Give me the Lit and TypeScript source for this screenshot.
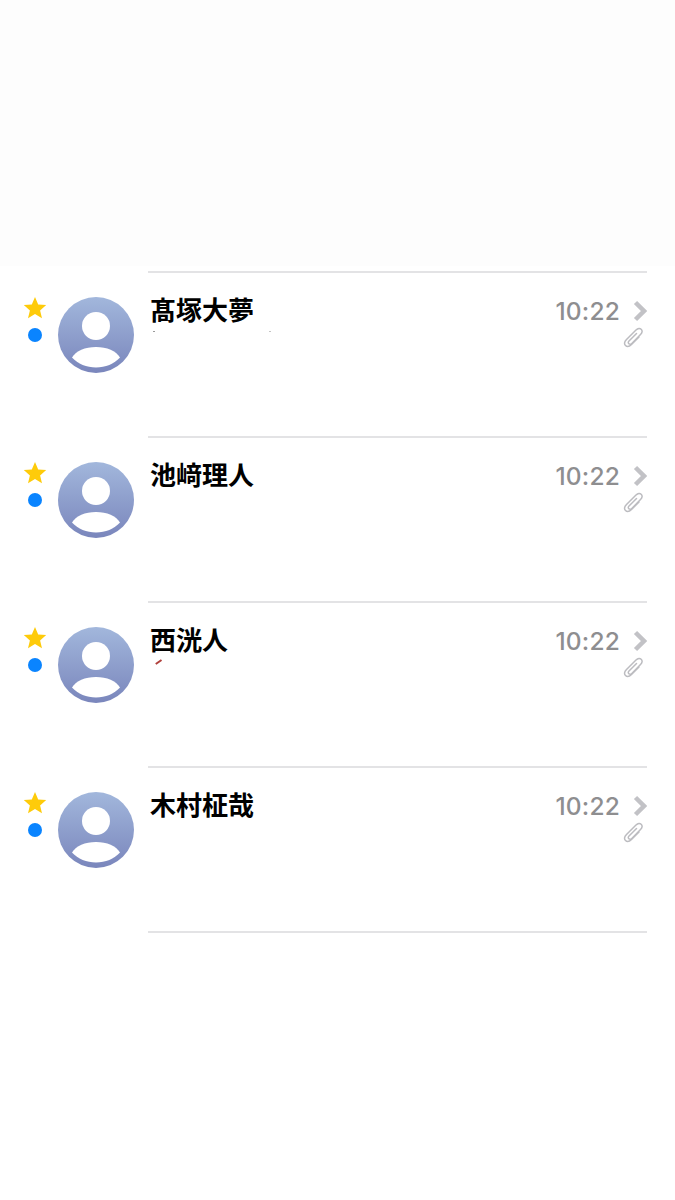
import { LitElement, html, css, svg } from 'lit';
import { customElement } from 'lit/decorators.js';

type Mail = { name: string; marks?: string };

const mails: Mail[] = [
  { name: '髙塚大夢', marks: 'specks' },
  { name: '池﨑理人' },
  { name: '西洸人', marks: 'red' },
  { name: '木村柾哉' },
];

const star = html`<svg class="star" viewBox="0 0 24 24" width="24" height="24">
  <path fill="#fecb0a" d="M12 1l3.200 7.400 8 .7-6.100 5.300 1.900 7.900L12 18.100 5 22.300l1.900-7.900L.8 9.100l8-.7z" />
</svg>`;

const avatar = html`<svg class="avatar" viewBox="0 0 76 76" width="76" height="76">
  <defs>
    <linearGradient id="av" x1="0" y1="0" x2="0" y2="1">
      <stop offset="0" stop-color="#a2b7dc" />
      <stop offset="1" stop-color="#7a86bc" />
    </linearGradient>
  </defs>
  <circle cx="38" cy="38" r="38" fill="url(#av)" />
  <circle cx="38" cy="29" r="14" fill="#fff" />
  <path fill="#fff" d="M14 60.500C18 54 27 50 38 50s20 4 24 10.500C56 67 47.500 70.500 38 70.500S20 67 14 60.500z" />
</svg>`;

const chevron = svg`<path d="M2.500 2.500l8.500 8.500-8.500 8.500" fill="none" stroke="#c2c2c6" stroke-width="4.500" />`;

const clip = svg`<path fill="none" stroke="#bcbcc0" stroke-width="1.500" stroke-linecap="round"
  d="M14.500 7.500L7 15c-1 1-1 2 0 2.800.9.800 1.800.7 2.800-.3l8.700-9c2-2 2-4 .7-5.200C18 2 16 2 14 4l-9.500 9.500c-2.300 2.300-2.500 4.500-1 6 1.500 1.500 3.700 1.300 6-1L17 11" />`;

@customElement('app-root')
export class AppRoot extends LitElement {
  static styles = css`
    :host {
      display: block;
      height: 1200px;
      background: #fff;
      font-family: 'Noto Sans CJK JP', 'Liberation Sans', sans-serif;
    }
    .top {
      height: 266px;
      background: #fdfdfd;
    }
    .list {
      padding-top: 5px;
    }
    .row {
      display: grid;
      grid-template-columns: 148px 1fr;
      height: 165px;
      margin-right: 28px;
    }
    .row:last-child {
      height: 2px;
    }
    .left {
      display: flex;
      align-items: flex-start;
    }
    .flags {
      display: flex;
      flex-direction: column;
      align-items: center;
      width: 24px;
      margin-left: 23px;
      padding-top: 25px;
      gap: 7px;
    }
    .star {
      display: block;
    }
    .dot {
      width: 14px;
      height: 14px;
      margin-top: 1px;
      border-radius: 50%;
      background: #0a84ff;
    }
    .avatar {
      display: block;
      flex: none;
      margin: 26px 0 0 11px;
    }
    .body {
      border-top: 2px solid #e3e3e5;
      display: flex;
      justify-content: space-between;
      grid-column: 2;
    }
    .main {
      padding: 17px 0 0 2px;
      width: 123px;
    }
    .name {
      font-size: 26px;
      font-weight: 700;
      line-height: 37px;
      color: #000;
      white-space: nowrap;
    }
    .preview {
      position: relative;
      height: 6px;
    }
    .speck {
      position: absolute;
      top: 4px;
      width: 2px;
      height: 1px;
      background: #9a9a9a;
    }
    .speck.a {
      left: 3px;
    }
    .speck.b {
      left: 119px;
      background: #c4c4c4;
    }
    .red {
      position: absolute;
      top: 4px;
      left: 5px;
      width: 7px;
      height: 1.500px;
      background: #b0403c;
      transform: rotate(-35deg);
    }
    .meta {
      display: flex;
      flex-direction: column;
      align-items: flex-end;
      padding-top: 20px;
    }
    .line {
      display: flex;
      align-items: center;
      gap: 13px;
    }
    .time {
      font-family: Inter, 'Liberation Sans', sans-serif;
      font-size: 24.500px;
      line-height: 36px;
      font-weight: 500;
      letter-spacing: 0.2px;
      color: #8e8e90;
    }
    .chev {
      display: block;
      width: 14px;
      height: 22px;
    }
    .clip {
      display: block;
      width: 22px;
      height: 22px;
      margin: -3px 3px 0 0;
    }
  `;

  render() {
    return html`
      <div class="top"></div>
      <div class="list">
        ${mails.map(
          (m) => html`
            <div class="row">
              <div class="left">
                <div class="flags">${star}<div class="dot"></div></div>
                ${avatar}
              </div>
              <div class="body">
                <div class="main">
                  <div class="name">${m.name}</div>
                  <div class="preview">
                    ${m.marks === 'specks'
                      ? html`<span class="speck a"></span><span class="speck b"></span>`
                      : ''}
                    ${m.marks === 'red' ? html`<span class="red"></span>` : ''}
                  </div>
                </div>
                <div class="meta">
                  <div class="line">
                    <span class="time">10:22</span>
                    <svg class="chev" viewBox="0 0 14 22">${chevron}</svg>
                  </div>
                  <svg class="clip" viewBox="0 0 22 22">${clip}</svg>
                </div>
              </div>
            </div>
          `,
        )}
        <div class="row"><div></div><div class="body"></div></div>
      </div>
    `;
  }
}
